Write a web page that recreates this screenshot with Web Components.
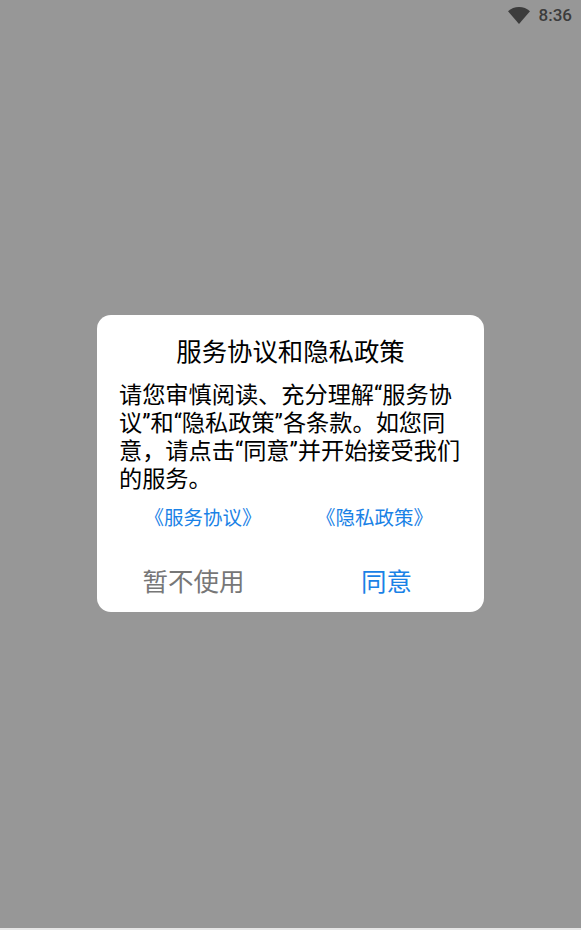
<!DOCTYPE html>
<html lang="zh">
<head>
<meta charset="utf-8">
<title>服务协议和隐私政策</title>
<style>
  html, body { margin: 0; padding: 0; height: 100%; }
  body { font-family: Roboto, "Noto Sans CJK SC", sans-serif; overflow: hidden; }
</style>
</head>
<body>
<app-screen>
  <status-bar slot="status" time="8:36"></status-bar>
  <policy-dialog heading="服务协议和隐私政策">
    请您审慎阅读、充分理解“服务协议”和“隐私政策”各条款。如您同意，请点击“同意”并开始接受我们的服务。
    <dialog-link slot="links">《服务协议》</dialog-link>
    <dialog-link slot="links">《隐私政策》</dialog-link>
    <dialog-button slot="actions" tone="muted">暂不使用</dialog-button>
    <dialog-button slot="actions" tone="primary">同意</dialog-button>
  </policy-dialog>
</app-screen>

<script>
class AppScreen extends HTMLElement {
  connectedCallback() {
    this.attachShadow({ mode: 'open' });
    this.shadowRoot.innerHTML = `
      <style>
        :host {
          display: flex;
          flex-direction: column;
          width: 581px;
          height: 930px;
          background: #979797;
        }
        .main {
          flex: 1;
          display: flex;
          justify-content: flex-start;
          padding: 285px 0 0 97px;
        }
        .nav {
          height: 2px;
          background: #e6e6e6;
        }
      </style>
      <slot name="status"></slot>
      <div class="main"><slot></slot></div>
      <div class="nav"></div>
    `;
  }
}

class StatusBar extends HTMLElement {
  connectedCallback() {
    this.attachShadow({ mode: 'open' });
    this.shadowRoot.innerHTML = `
      <style>
        :host {
          display: flex;
          align-items: center;
          justify-content: flex-end;
          height: 30px;
          padding-right: 9px;
          gap: 9px;
          color: #3c3c3c;
          font: 500 17px Roboto, sans-serif;
        }
        svg { display: block; width: 22px; height: 17px; }
      </style>
      <svg viewBox="0 0 22 17"><path d="M11 17 0 4.2C3 1.6 6.8 0 11 0s8 1.6 11 4.2z" fill="#3c3c3c"/></svg>
      <span>${this.getAttribute('time')}</span>
    `;
  }
}

class PolicyDialog extends HTMLElement {
  connectedCallback() {
    this.attachShadow({ mode: 'open' });
    this.shadowRoot.innerHTML = `
      <style>
        :host {
          display: block;
          box-sizing: border-box;
          width: 387px;
          height: 297px;
          background: #fff;
          border-radius: 14px;
          color: #000;
        }
        h2 {
          margin: 0;
          padding-top: 19px;
          font-size: 25.4px;
          font-weight: 400;
          line-height: 36px;
          text-align: center;
        }
        .body {
          margin: 11px 19px 0 22px;
          font-size: 23.2px;
          line-height: 28px;
        }
        .links {
          display: flex;
          margin: 12px 0 0 0;
          padding: 0 51px 0 47.5px;
          justify-content: space-between;
        }
        .actions {
          display: flex;
          margin-top: 31px;
          padding-right: 1px;
        }
      </style>
      <h2>${this.getAttribute('heading')}</h2>
      <div class="body"><slot></slot></div>
      <div class="links"><slot name="links"></slot></div>
      <div class="actions"><slot name="actions"></slot></div>
    `;
  }
}

class DialogLink extends HTMLElement {
  connectedCallback() {
    this.attachShadow({ mode: 'open' });
    this.shadowRoot.innerHTML = `
      <style>
        :host {
          display: block;
          color: #1a82e6;
          font-size: 19.5px;
          line-height: 28px;
        }
      </style>
      <slot></slot>
    `;
  }
}

class DialogButton extends HTMLElement {
  connectedCallback() {
    this.attachShadow({ mode: 'open' });
    this.shadowRoot.innerHTML = `
      <style>
        :host {
          flex: 1;
          display: block;
          text-align: center;
          font-size: 25.5px;
          line-height: 36px;
        }
        :host([tone="muted"]) { color: #777; }
        :host([tone="primary"]) { color: #1a82e6; }
      </style>
      <slot></slot>
    `;
  }
}

customElements.define('app-screen', AppScreen);
customElements.define('status-bar', StatusBar);
customElements.define('policy-dialog', PolicyDialog);
customElements.define('dialog-link', DialogLink);
customElements.define('dialog-button', DialogButton);
</script>
</body>
</html>
